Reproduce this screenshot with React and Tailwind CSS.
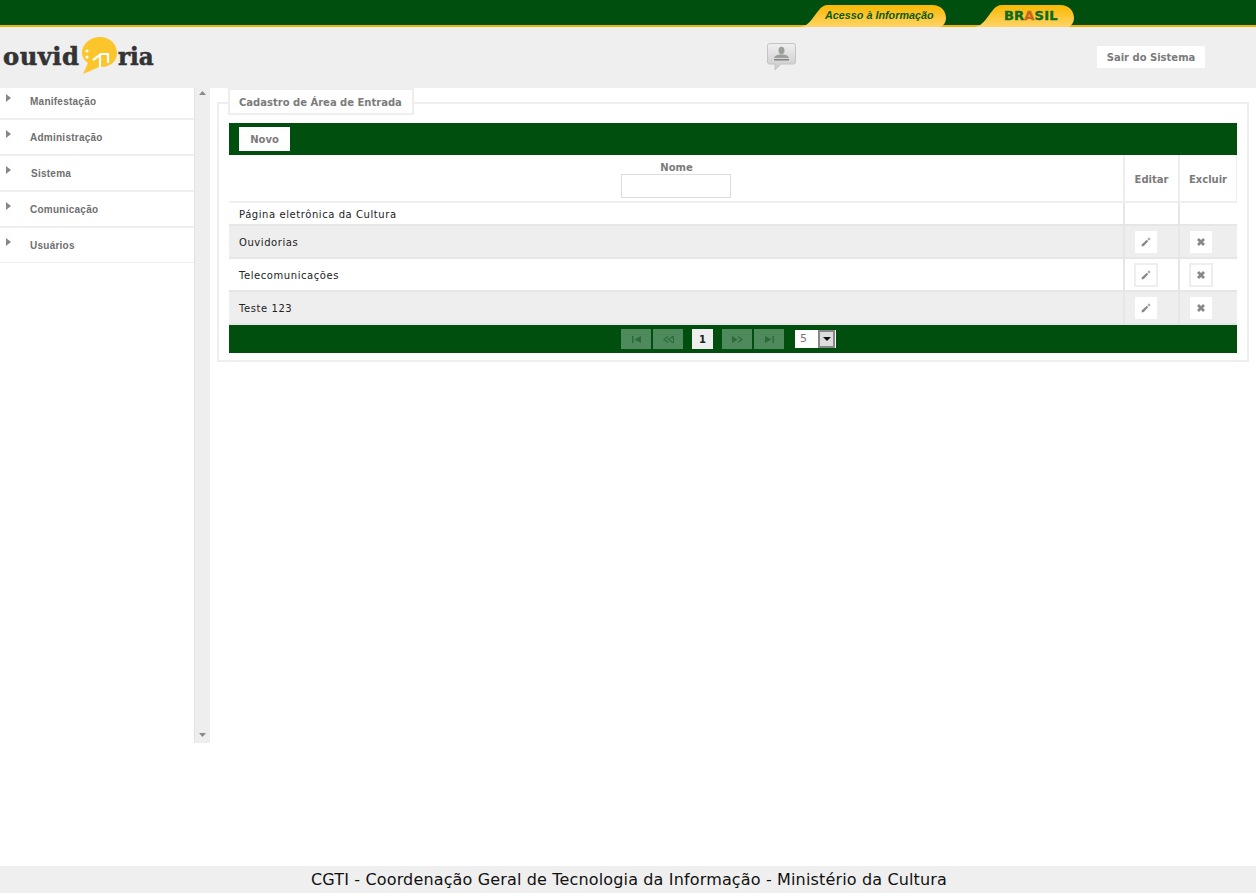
import React from "react";

const menu = ["Manifestação", "Administração", "Sistema", "Comunicação", "Usuários"];
const menuPad = ["pl-[30px]", "pl-[30px]", "pl-[31px]", "pl-[30px]", "pl-[30px]"];
const menuRow = ["h-[32px]", "h-[36px]", "h-[36px]", "h-[36px]", "h-[35px]"];

const rows = [
  { nome: "Página eletrônica da Cultura", actions: false, alt: false },
  { nome: "Ouvidorias", actions: true, alt: true },
  { nome: "Telecomunicações", actions: true, alt: false },
  { nome: "Teste 123", actions: true, alt: true },
];

function Pencil() {
  return (
    <svg width="10" height="10" viewBox="0 0 10 10">
      <path d="M0.6 9.4 L1 7.2 L5.8 2.8 L7.2 4.2 L2.8 9 Z" fill="#888" />
      <path d="M8 0 L8.5 1.5 L10 2 L8.5 2.5 L8 4 L7.5 2.5 L6 2 L7.5 1.5 Z" fill="#888" />
    </svg>
  );
}

function Cross() {
  return (
    <svg width="8" height="8" viewBox="0 0 8 8">
      <path d="M1 1 L7 7 M7 1 L1 7" stroke="#888" strokeWidth="2.8" />
    </svg>
  );
}

function PageBtn({ children }) {
  return (
    <div className="w-[30px] h-[20px] bg-[#4e8a5c] flex items-center justify-center text-[#2c6a3a]">
      {children}
    </div>
  );
}

function IconCell({ hover, children }) {
  return (
    <div
      className={`bg-white flex items-center justify-center ${hover ? "w-[24px] h-[24px] border-2 border-[#eeeeee]" : "w-[22px] h-[22px] ml-[1px]"}`}
    >
      {children}
    </div>
  );
}

export default function App() {
  return (
    <div className="h-[896px] bg-white flex flex-col overflow-hidden font-['Verdana','DejaVu_Sans',sans-serif]">
      {/* barra do governo */}
      <div className="h-[27px] bg-[#004f0f] border-b-2 border-[#f0b400] flex shrink-0 relative">
        <div className="absolute left-[800px] top-[4px] w-[146px] h-[23px]">
          <svg width="146" height="23" viewBox="0 0 146 23" className="absolute inset-0">
            <defs>
              <linearGradient id="ouro" x1="0" y1="0" x2="0" y2="1">
                <stop offset="0" stopColor="#f9b800" />
                <stop offset="1" stopColor="#ffd467" />
              </linearGradient>
            </defs>
            <path d="M0 23 C10 22 14 11 19 6 C21 3 24 1 28 1 L132 1 C142 1 146 8 146 14 C146 18 144 21 141 23 Z" fill="url(#ouro)" />
          </svg>
          <span className="absolute left-[25px] top-[4px] text-[10.8px] leading-[14px] italic font-bold text-[#0b5a12] font-['Liberation_Sans',sans-serif] whitespace-nowrap">
            Acesso à Informação
          </span>
        </div>
        <div className="absolute left-[974px] top-[4px] w-[100px] h-[23px]">
          <svg width="100" height="23" viewBox="0 0 100 23" className="absolute inset-0">
            <path d="M0 23 C10 22 14 11 19 6 C21 3 24 1 28 1 L86 1 C96 1 100 8 100 14 C100 18 98 21 95 23 Z" fill="url(#ouro)" />
          </svg>
          <span className="absolute left-[30px] top-[4px] text-[13px] leading-[15px] font-bold tracking-[0.2px] text-[#0b6a1c] font-['DejaVu_Sans',sans-serif] [-webkit-text-stroke:0.4px_#0b6a1c]">
            BR<span className="text-[#c8641c] [-webkit-text-stroke:0.4px_#c8641c]">A</span>SIL
          </span>
        </div>
      </div>

      {/* cabecalho */}
      <div className="h-[61px] bg-[#efefef] flex items-center shrink-0 relative">
        <div className="flex items-center ml-[3px] h-[38px] -mt-[3px]">
          <span className="text-[25px] leading-none font-bold tracking-[0.5px] text-[#333333] font-['DejaVu_Serif',serif] [-webkit-text-stroke:0.6px_#333333] scale-x-[0.97] origin-left w-[77px] whitespace-nowrap">
            ouvid
          </span>
          <svg width="38" height="38" viewBox="0 0 38 38" className="shrink-0">
            <path d="M20 0 C30 0 37 7 37 16 C37 25 29 31 19 30 L3 37 L8 26 C4 23 2 20 2 16 C2 7 10 0 20 0 Z" fill="#fdc52c" />
            <circle cx="7" cy="14" r="1.6" fill="#fff" />
            <circle cx="7" cy="20" r="1.6" fill="#fff" />
            <path d="M13 23 L21 17 L28 17 L28 26 M20 17 L20 30" fill="none" stroke="#fff" strokeWidth="2.2" />
          </svg>
          <span className="text-[25px] leading-none font-bold text-[#333333] font-['DejaVu_Serif',serif] [-webkit-text-stroke:0.6px_#333333] scale-x-[0.92] origin-left whitespace-nowrap">
            ria
          </span>
        </div>
        <div className="absolute left-[767px] top-[16px]">
          <svg width="29" height="28" viewBox="0 0 29 28">
            <defs>
              <linearGradient id="balao" x1="0" y1="0" x2="0" y2="1">
                <stop offset="0" stopColor="#f0f0f0" />
                <stop offset="1" stopColor="#c8c8c8" />
              </linearGradient>
            </defs>
            <path d="M2.5 0.5 H26.5 a2 2 0 0 1 2 2 V19 a2 2 0 0 1 -2 2 H14 L8 27 V21 H2.5 a2 2 0 0 1 -2 -2 V2.5 a2 2 0 0 1 2 -2 Z" fill="url(#balao)" stroke="#c4c4c4" />
            <ellipse cx="14.5" cy="7.5" rx="3" ry="3.8" fill="#9a9f9a" />
            <path d="M7 15 C8 12 11 11.5 14.5 11.5 C18 11.5 21 12 22 15 Z" fill="#9a9f9a" />
            <rect x="7" y="16" width="15" height="1.5" fill="#7f847f" />
          </svg>
        </div>
        <div className="absolute left-[1097px] top-[19px] w-[108px] h-[22px] bg-white flex items-center justify-center text-[10px] font-bold text-[#7b7b7b]">
          Sair do Sistema
        </div>
      </div>

      {/* corpo */}
      <div className="flex items-start flex-1 min-h-0">
        <div className="w-[210px] h-[655px] flex shrink-0">
          <div className="w-[194px]">
            {menu.map((item, i) => (
              <div
                key={item}
                className={`${menuRow[i]} ${i === 4 ? "border-b" : "border-b-2"} border-[#eeeeee] relative flex items-end pb-[11px]`}
              >
                <svg width="5" height="8" viewBox="0 0 5 8" className="absolute left-[6px] bottom-[16px]">
                  <path d="M0 0 L5 4 L0 8 Z" fill="#888888" />
                </svg>
                <span className={`${menuPad[i]} text-[10px] font-bold tracking-[0.25px] text-[#6f6f6f] leading-[10px] font-['Liberation_Sans',sans-serif]`}>{item}</span>
              </div>
            ))}
          </div>
          <div className="w-[16px] bg-[#eeeeee] border-l border-[#e2e2e2] flex flex-col items-center justify-between pt-[3px] pb-[6px]">
            <svg width="7" height="4" viewBox="0 0 7 4"><path d="M3.5 0 L7 4 H0 Z" fill="#8a8a8a" /></svg>
            <svg width="7" height="4" viewBox="0 0 7 4"><path d="M0 0 H7 L3.5 4 Z" fill="#8a8a8a" /></svg>
          </div>
        </div>

        <div className="flex-1 pl-[7px] pr-[7px] pt-[14px]">
          <div className="border-2 border-[#eeeeee] h-[260px] pl-[10px] pr-[10px] pt-[19px] relative">
            <div className="absolute left-[9px] -top-[16px] h-[27px] bg-white border-2 border-[#eeeeee] pl-[9px] pr-[10px] pt-[2px] flex items-center text-[10px] font-bold text-[#7b7b7b]">
              Cadastro de Área de Entrada
            </div>
            <div className="bg-[#004f0f] h-[32px] flex items-center pl-[10px]">
              <div className="w-[51px] h-[24px] bg-white flex items-center justify-center text-[10px] font-bold text-[#7b7b7b]">
                Novo
              </div>
            </div>
            <div className="flex h-[48px] border-b-2 border-[#eeeeee]">
              <div className="flex-1 flex flex-col items-center pt-[6px] pr-[1px]">
                <span className="text-[10px] font-bold text-[#7b7b7b] leading-[13px] ml-[2px]">Nome</span>
                <div className="w-[110px] h-[24px] bg-white border border-[#dddddd]" />
              </div>
              <div className="w-[55px] border-l-2 border-[#eeeeee] pt-[2px] flex items-center justify-center text-[10px] font-bold text-[#7b7b7b]">
                Editar
              </div>
              <div className="w-[59px] border-l-2 border-r border-[#eeeeee] pt-[2px] flex items-center justify-center text-[10px] font-bold text-[#7b7b7b]">
                Excluir
              </div>
            </div>
            {rows.map((r) => (
              <div
                key={r.nome}
                className={`flex border-b-2 border-[#e6e6e6] ${r.actions ? "h-[33px]" : "h-[23px]"} ${r.alt ? "bg-[#eeeeee]" : "bg-white"}`}
              >
                <div className="flex-1 pl-[10px] pt-[2px] flex items-center text-[10px] tracking-[0.57px] text-[#222222]">{r.nome}</div>
                <div className="w-[55px] border-l-2 border-[#e6e6e6] flex items-center pl-[9px]">
                  {r.actions && (
                    <IconCell hover={!r.alt}>
                      <Pencil />
                    </IconCell>
                  )}
                </div>
                <div className="w-[59px] border-l-2 border-[#e6e6e6] flex items-center pl-[9px]">
                  {r.actions && (
                    <IconCell hover={!r.alt}>
                      <Cross />
                    </IconCell>
                  )}
                </div>
              </div>
            ))}
            <div className="bg-[#004f0f] h-[28px] flex items-center pl-[392px]">
              <div className="flex gap-[2px]">
                <PageBtn>
                  <svg width="9" height="7" viewBox="0 0 9 7"><path d="M0 0 H1.5 V7 H0 Z M9 0 V7 L2.5 3.5 Z" fill="currentColor" /></svg>
                </PageBtn>
                <PageBtn>
                  <svg width="11" height="7" viewBox="0 0 11 7"><path d="M5 0.5 L1 3.5 L5 6.5 M10.5 0 V7 L5.5 3.5 Z" fill="none" stroke="currentColor" strokeWidth="1.2" /></svg>
                </PageBtn>
              </div>
              <div className="w-[21px] h-[20px] bg-[#eeeeee] ml-[9px] flex items-center justify-center text-[10px] font-bold text-[#222222]">
                1
              </div>
              <div className="flex gap-[2px] ml-[9px]">
                <PageBtn>
                  <svg width="11" height="7" viewBox="0 0 11 7"><path d="M0 0 V7 L5.5 3.5 Z" fill="currentColor" /><path d="M6 0.5 L10 3.5 L6 6.5" fill="none" stroke="currentColor" strokeWidth="1.2" /></svg>
                </PageBtn>
                <PageBtn>
                  <svg width="9" height="7" viewBox="0 0 9 7"><path d="M0 0 V7 L6.5 3.5 Z M7.5 0 H9 V7 H7.5 Z" fill="currentColor" /></svg>
                </PageBtn>
              </div>
              <div className="ml-[11px] w-[41px] h-[18px] bg-white flex items-center justify-between pr-[1px]">
                <span className="pl-[5px] text-[11px] text-[#777777]">5</span>
                <div className="w-[17px] h-[18px] border-2 border-[#888888] bg-[#dddddd] flex items-center justify-center">
                  <svg width="8" height="4" viewBox="0 0 8 4"><path d="M0 0 H8 L4 4 Z" fill="#111" /></svg>
                </div>
              </div>
            </div>
          </div>
        </div>
      </div>

      {/* rodape */}
      <div className="h-[27px] bg-[#efefef] mb-[3px] pl-[2px] flex items-center justify-center shrink-0 text-[16px] tracking-[0.15px] text-[#111111]">
        CGTI - Coordenação Geral de Tecnologia da Informação - Ministério da Cultura
      </div>
    </div>
  );
}
